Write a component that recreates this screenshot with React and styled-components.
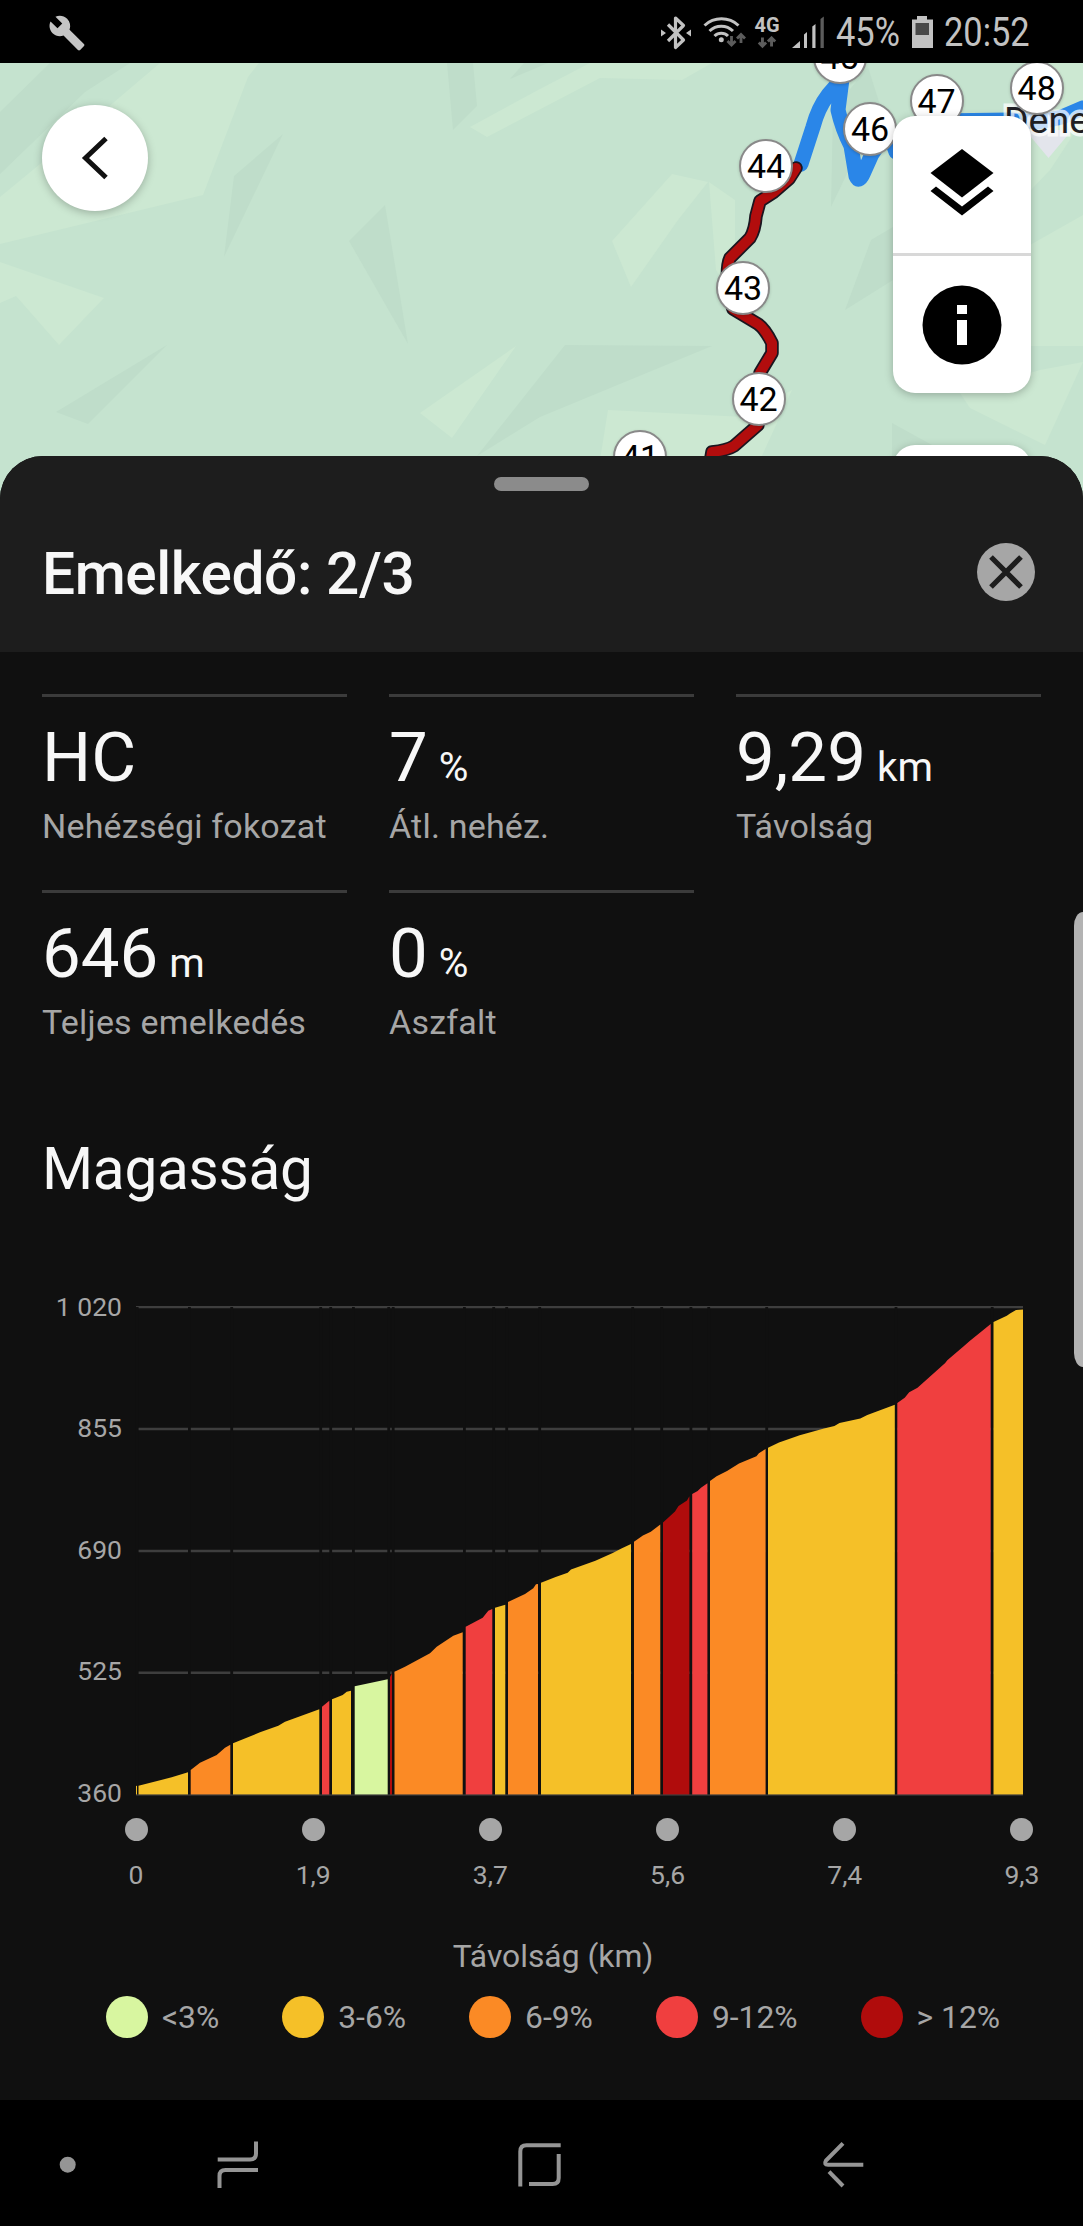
import React from "react";
import styled, { createGlobalStyle } from "styled-components";
import { MdBuild } from "react-icons/md";

const GlobalStyle = createGlobalStyle`
  * { box-sizing: border-box; }
  html, body { margin: 0; padding: 0; background: #000; }
  body { font-family: Roboto, "Noto Sans", sans-serif; -webkit-font-smoothing: antialiased; }
`;

const Screen = styled.div`
  position: relative;
  width: 1083px;
  height: 2226px;
  display: flex;
  flex-direction: column;
  overflow: hidden;
  background: #000;
`;

/* ---------- status bar ---------- */

const StatusBar = styled.header`
  height: 63px;
  flex: none;
  display: flex;
  align-items: center;
  justify-content: space-between;
  padding: 3px 52px 0 48px;
  color: #c2c2c2;
`;

const StatusGroup = styled.div`
  display: flex;
  align-items: center;
`;

const StatusIcon = styled.svg`
  flex: none;
  margin-left: ${(p) => p.$left || 0}px;
`;

const StatusText = styled.span`
  display: block;
  flex: none;
  width: ${(p) => p.$width}px;
  margin-left: ${(p) => p.$left}px;
  font-size: 40px;
  line-height: 60px;
  white-space: nowrap;
  transform: scaleX(0.86);
  transform-origin: left center;
`;

const NetworkBadge = styled.div`
  flex: none;
  width: 26px;
  height: 60px;
  padding-top: 11px;
  margin-left: 7px;
  display: flex;
  flex-direction: column;
  align-items: center;
  font-size: 20px;
  font-weight: 700;
  line-height: 22px;
`;

const BluetoothIcon = () => (
  <StatusIcon width="32" height="36" viewBox="659 15 32 36">
    <path d="M667 24.500L682.500 40L674.500 47.500V18L682.500 25.500L667 41" fill="none" stroke="#c2c2c2" strokeWidth="3.200" strokeLinejoin="round" />
    <path d="M660 29.500L665 33L660 36.500ZM690 29.500L685 33L690 36.500Z" fill="#c2c2c2" />
  </StatusIcon>
);

const DataArrows = () => (
  <svg width="20" height="13" viewBox="0 0 22 13">
    <g fill="none" stroke="#5c5c5c" strokeWidth="3.200">
      <path d="M6 1V10M2 6.500L6 10.500L10 6.500" />
      <path d="M16 11V2M12 5.500L16 1.500L20 5.500" />
    </g>
  </svg>
);

const WifiIcon = () => (
  <StatusIcon $left={11} width="44" height="36" viewBox="702 15 44 36">
    <g fill="none" stroke="#c2c2c2" strokeWidth="3">
      <path d="M703.500 25.500A25 25 0 0 1 737.500 25.500" />
      <path d="M708.500 31A17 17 0 0 1 732 31" />
      <path d="M713.500 36A9.500 9.500 0 0 1 727 36" />
    </g>
    <circle cx="720.300" cy="39.800" r="2.500" fill="#c2c2c2" />
    <g fill="none" stroke="#5c5c5c" strokeWidth="2.800">
      <path d="M730.500 36V45M726.500 41L730.500 45L734.500 41" />
      <path d="M740 43V34.500M736 38.500L740 34.500L744 38.500" />
    </g>
  </StatusIcon>
);

const SignalIcon = () => (
  <StatusIcon $left={12} width="32" height="36" viewBox="791 15 32 36">
    <g fill="#c2c2c2">
      <path d="M791 48L799 41V48Z" />
      <path d="M803 34.500L806 32V48H803Z" />
      <path d="M811.300 26.500L814.500 24V48H811.300Z" />
    </g>
    <path d="M819.500 19L822.800 16.500V48H819.500Z" fill="#5c5c5c" />
  </StatusIcon>
);

const BatteryIcon = () => (
  <StatusIcon $left={12} width="22" height="36" viewBox="910 15 22 36">
    <path d="M911 19.500H916V16H926V19.500H932V48H911Z" fill="#c2c2c2" />
    <rect x="914.500" y="23" width="13.500" height="12" fill="#4a4a4a" />
  </StatusIcon>
);

/* ---------- map ---------- */

const MapArea = styled.section`
  position: relative;
  flex: none;
  height: 453px;
  margin-bottom: -60px;
  overflow: hidden;
  background: #c5e3cf;
`;

const MapArt = styled.svg`
  display: block;
`;

const KmPin = styled.span`
  position: absolute;
  left: ${(p) => p.$x - 27}px;
  top: ${(p) => p.$y - 63 - 27}px;
  width: 54px;
  height: 54px;
  border-radius: 50%;
  border: 2px solid #898989;
  background: #fff;
  color: #000;
  font-size: 34px;
  line-height: 51px;
  text-align: center;
  box-shadow: 0 1px 3px rgba(0, 0, 0, 0.18);
`;

const PlaceLabel = styled.span`
  position: absolute;
  left: 1004px;
  top: 34px;
  font-size: 37.5px;
  line-height: 46px;
  white-space: nowrap;
  color: #1f1f24;
  paint-order: stroke fill;
  -webkit-text-stroke: 7px rgba(255, 255, 255, 0.72);
`;

const BackButton = styled.button`
  position: absolute;
  left: 42px;
  top: 42px;
  width: 106px;
  height: 106px;
  border: 0;
  padding: 0;
  border-radius: 50%;
  background: #fff;
  display: grid;
  place-items: center;
  box-shadow: 0 2px 8px rgba(0, 0, 0, 0.25);
`;

const MapControls = styled.div`
  position: absolute;
  left: 893px;
  top: 53px;
  width: 138px;
  display: flex;
  flex-direction: column;
  gap: 52px;
`;

const ControlCard = styled.div`
  display: flex;
  flex-direction: column;
  min-height: 100px;
  border-radius: 22px;
  background: #fff;
  box-shadow: 0 2px 8px rgba(0, 0, 0, 0.25);
`;

const ControlButton = styled.button`
  height: ${(p) => (p.$divided ? 140 : 137)}px;
  padding: 0 0 ${(p) => (p.$divided ? 4 : 0)}px;
  border: 0;
  border-bottom: ${(p) => (p.$divided ? "3px solid #d8d8d8" : "0")};
  background: none;
  display: grid;
  place-items: center;
`;

const LIGHT = "#cce8d2";
const DARK = "#bfddca";

const facets = [
  [DARK, "50,63 130,63 85,92 0,174 0,112"],
  [LIGHT, "160,63 259,63 248,77 203,195 0,244 0,197 45,160 113,103"],
  [LIGHT, "0,262 104,298 59,345 16,296 0,303"],
  [DARK, "283,134 234,176 224,257"],
  [DARK, "385,205 349,241 408,344"],
  [DARK, "167,345 56,412 88,424"],
  [LIGHT, "516,346 420,413 452,438"],
  [DARK, "565,345 712,346 540,417 477,456"],
  [DARK, "447,63 473,63 477,106 453,130"],
  [LIGHT, "470,127 487,137 600,78 682,80 712,63 590,63 540,89"],
  [DARK, "510,79 524,63 548,63"],
  [LIGHT, "672,174 708,182 678,220 631,287 612,241"],
  [LIGHT, "709,182 735,200 735,300 716,270"],
  [LIGHT, "608,410 745,417 792,390 760,460 600,460"],
  [DARK, "893,227 871,240 845,310 893,280"],
  [DARK, "868,67 880,105 831,207 833,110"],
  [DARK, "892,423 932,445 892,470"],
  [LIGHT, "960,393 1040,370 1083,362 1045,445 970,408"],
  [LIGHT, "1031,63 1083,63 1083,120 1050,170 1031,190"],
  [LIGHT, "1030,245 1083,215 1083,346 1030,346"],
];

const climb =
  "M796 168L789 179L774 192L760 201L756 216Q755 230 750 238L730 258Q726 266 728 290L733 309L758 324Q765 329 772 343V353L760 373L758 425L734 446Q728 450 712 452L708 475";

const MapDrawing = () => (
  <MapArt width="1083" height="453" viewBox="0 63 1083 453">
    {facets.map(([fill, points]) => (
      <polygon key={points} points={points} fill={fill} />
    ))}
    <path d="M1025 130H1072L1048.500 158Z" fill="#e3e5ec" />
    <g fill="none" stroke="#2a86e8" strokeWidth="15" strokeLinejoin="round" strokeLinecap="round">
      <path d="M801 164L813 127Q818 108 828 95L842 79L838 110Q842 128 851 146L856 176Q859 183 863 174L872 154L888 130L896 152" />
      <path d="M936 121L1010 120L1040 122L1062 117L1083 108L1095 106" />
    </g>
    <path d={climb} fill="none" stroke="#1b1620" strokeWidth="13.500" strokeLinejoin="round" strokeLinecap="round" />
    <path d={climb} fill="none" stroke="#b20d0d" strokeWidth="10" strokeLinejoin="round" strokeLinecap="round" />
  </MapArt>
);

const pins = [
  { km: 41, x: 640, y: 457 },
  { km: 42, x: 758.5, y: 399 },
  { km: 43, x: 743, y: 288 },
  { km: 44, x: 766, y: 166 },
  { km: 45, x: 839.5, y: 57 },
  { km: 46, x: 870, y: 128.5 },
  { km: 47, x: 936.5, y: 101 },
  { km: 48, x: 1036.7, y: 88 },
];

/* ---------- bottom sheet ---------- */

const Sheet = styled.main`
  position: relative;
  flex: none;
  height: 1644px;
  border-radius: 43px 43px 0 0;
  overflow: hidden;
  background: #101010;
`;

const SheetHeader = styled.div`
  height: 196px;
  padding: 21px 48px 0 42px;
  display: flex;
  flex-direction: column;
  background: #1d1d1d;
`;

const Handle = styled.div`
  align-self: center;
  width: 95px;
  height: 14px;
  margin-left: 6px;
  flex: none;
  border-radius: 7px;
  background: #8b8b8b;
`;

const TitleRow = styled.div`
  display: flex;
  align-items: center;
  justify-content: space-between;
  margin-top: 47px;
  height: 70px;
`;

const Title = styled.h1`
  margin: 1px 0 0;
  font-size: 58.6px;
  font-weight: 500;
  line-height: 70px;
  letter-spacing: -0.4px;
  color: #f7f7f7;
`;

const CloseButton = styled.button`
  width: 58px;
  height: 58px;
  margin-top: -3px;
  border: 0;
  padding: 0;
  border-radius: 50%;
  background: #a6a6a6;
  display: grid;
  place-items: center;
`;

const StatGrid = styled.dl`
  margin: 0;
  padding: 42px 42px 0;
  display: grid;
  grid-template-columns: repeat(3, 1fr);
  grid-auto-rows: 196px;
  column-gap: 42px;
`;

const Stat = styled.div`
  border-top: 3px solid #3b3b3b;
  padding-top: 21px;
  display: flex;
  flex-direction: column-reverse;
  justify-content: flex-end;
`;

const StatValue = styled.dd`
  margin: 0;
  height: 80px;
  font-size: 69px;
  line-height: 80px;
  color: #f7f7f7;
  white-space: nowrap;
`;

const Unit = styled.span`
  margin-left: 11px;
  font-size: 40.5px;
  line-height: 1;
`;

const StatLabel = styled.dt`
  margin-top: 8px;
  font-size: 34px;
  line-height: 40px;
  letter-spacing: 0.2px;
  color: #a6a6a6;
  white-space: nowrap;
`;

const SectionTitle = styled.h2`
  margin: 48px 0 0 42px;
  font-size: 58.6px;
  font-weight: 400;
  line-height: 70px;
  letter-spacing: -0.3px;
  color: #f7f7f7;
`;

const Chart = styled.figure`
  margin: 102px 0 0;
  display: grid;
  grid-template-columns: 122px 901px;
`;

const YAxis = styled.div`
  height: 486px;
  display: flex;
  flex-direction: column;
  justify-content: space-between;
`;

const YLabel = styled.span`
  height: 0;
  display: flex;
  align-items: center;
  justify-content: flex-end;
  font-size: 26.5px;
  color: #a6a6a6;
  white-space: nowrap;
`;

const Plot = styled.svg`
  display: block;
  margin-left: 12px;
`;

const XAxis = styled.div`
  grid-column: 1 / -1;
  display: flex;
  justify-content: space-between;
  margin: 22px 0 0 94px;
  width: 970px;
`;

const XTick = styled.div`
  width: 84px;
  display: flex;
  flex-direction: column;
  align-items: center;
  gap: 18px;
  font-size: 26.5px;
  line-height: 32px;
  color: #a6a6a6;
`;

const TickDot = styled.i`
  width: 23px;
  height: 23px;
  border-radius: 50%;
  background: #a6a6a6;
`;

const AxisCaption = styled.figcaption`
  grid-column: 1 / -1;
  margin: 45px 0 0 23px;
  width: 1060px;
  text-align: center;
  font-size: 31.8px;
  line-height: 40px;
  color: #a6a6a6;
`;

const Legend = styled.ul`
  list-style: none;
  margin: 20px 0 0 23px;
  padding: 0;
  width: 1060px;
  display: flex;
  justify-content: center;
  gap: 63px;
`;

const LegendItem = styled.li`
  display: flex;
  align-items: center;
  gap: 14px;
  font-size: 31.8px;
  line-height: 42px;
  color: #a6a6a6;
  white-space: nowrap;

  &::before {
    content: "";
    width: 42px;
    height: 42px;
    border-radius: 50%;
    background: ${(p) => p.$color};
  }
`;

const EdgeHandle = styled.div`
  position: absolute;
  right: 0;
  top: 912px;
  width: 9px;
  height: 455px;
  border-radius: 9px 0 0 9px / 14px 0 0 14px;
  background: #b3b3b3;
`;

const grade = {
  easy: "#d8f6a0",
  mild: "#f5c028",
  mid: "#fb8a25",
  hard: "#f03f3f",
  extreme: "#b00c0c",
};

const segments = [
  ["mild", [[136, 1786], [137, 1785.7]]],
  ["mild", [[138.5, 1785.7], [171.7, 1777.3], [188, 1772.3]]],
  ["mid", [[190.7, 1770], [200, 1762.7], [216.7, 1755], [225, 1747.7], [230.3, 1744.7]]],
  ["mild", [[233, 1743.3], [260, 1732.3], [278.3, 1725.7], [285, 1721.7], [319.3, 1709.3]]],
  ["hard", [[322, 1706.7], [329.3, 1700.7]]],
  ["mild", [[332, 1699.3], [342.7, 1695], [346.7, 1691.7], [351, 1690.7]]],
  ["easy", [[354.7, 1686.3], [387.7, 1679.3]]],
  ["extreme", [[390, 1677], [392, 1673.5]]],
  ["mid", [[394.5, 1671.7], [405, 1666.7], [430, 1653.3], [436.7, 1646.7], [453.3, 1635.7], [462.7, 1632.3]]],
  ["hard", [[465.7, 1626.7], [482.7, 1617.7], [488.3, 1610.7], [492.3, 1609]]],
  ["mild", [[495, 1607.7], [505.3, 1604.7]]],
  ["mid", [[508, 1602], [525, 1594], [533.3, 1588.3], [536, 1584.3], [538, 1584]]],
  ["mild", [[541, 1582.7], [555.6, 1576.9], [567.7, 1572.7], [571, 1569.6], [595.4, 1560.7], [612.7, 1553], [621.4, 1548.6], [631, 1544]]],
  ["mid", [[634, 1541.7], [642.9, 1535.5], [650.8, 1531.7], [660.3, 1524.5]]],
  ["extreme", [[663, 1522.4], [675, 1511.4], [678.5, 1505.9], [687, 1500.4], [689.4, 1496.3]]],
  ["hard", [[692.2, 1493.9], [697.6, 1491], [701, 1487.7], [707.4, 1483.2]]],
  ["mid", [[710, 1481], [716.6, 1476.3], [727, 1471], [739, 1463.6], [756.4, 1456.3], [758.9, 1453.2], [765.6, 1449]]],
  ["mild", [[768, 1447.7], [779, 1442.6], [799.7, 1435.3], [824, 1428.4], [834.4, 1426], [839.5, 1422.9], [860.3, 1418.4], [867.3, 1415], [894.8, 1404.7]]],
  ["hard", [[897.3, 1403], [904.7, 1397.8], [909.2, 1392.3], [917.5, 1387.8], [945.2, 1363], [947.3, 1360.2], [964, 1346], [969.4, 1341.3], [990.7, 1324]]],
  ["mild", [[993.5, 1322], [1006.8, 1315.8], [1010, 1313.4], [1016, 1310], [1023, 1309.6]]],
];

const yTicks = ["1 020", "855", "690", "525", "360"];
const gridY = [1307, 1429, 1551, 1672.7];
const xTicks = ["0", "1,9", "3,7", "5,6", "7,4", "9,3"];

const ElevationPlot = () => (
  <Plot width="889" height="490" viewBox="134 1306 889 490">
    {gridY.map((y) => (
      <path key={y} d={`M136 ${y}H1023`} stroke="#3e3e3e" strokeWidth="2.400" />
    ))}
    {segments.slice(1).map(([, pts]) => (
      <path key={pts[0][0]} d={`M${pts[0][0] - 1.3} 1307V1795`} stroke="#101010" strokeWidth="2.800" />
    ))}
    {segments.map(([kind, pts], i) => (
      <polygon
        key={i}
        fill={grade[kind]}
        points={`${pts[0][0]},1795 ${pts.map((p) => p.join(",")).join(" ")} ${pts[pts.length - 1][0]},1795`}
      />
    ))}
    <path d="M136 1795H1023" stroke="#3e3e3e" strokeWidth="1.500" opacity="0.8" />
  </Plot>
);

const stats = [
  { label: "Nehézségi fokozat", value: "HC" },
  { label: "Átl. nehéz.", value: "7", unit: "%" },
  { label: "Távolság", value: "9,29", unit: "km" },
  { label: "Teljes emelkedés", value: "646", unit: "m" },
  { label: "Aszfalt", value: "0", unit: "%" },
];

const legend = [
  [grade.easy, "<3%"],
  [grade.mild, "3-6%"],
  [grade.mid, "6-9%"],
  [grade.hard, "9-12%"],
  [grade.extreme, "> 12%"],
];

/* ---------- navigation bar ---------- */

const NavBar = styled.nav`
  flex: none;
  height: 126px;
  display: flex;
  align-items: center;
  padding: 3px 0 0 59px;
`;

const NavItem = styled.svg`
  flex: none;
  margin-right: ${(p) => p.$gap || 0}px;
  fill: none;
  stroke: #959595;
  stroke-width: 4;
`;

export default function App() {
  return (
    <Screen>
      <GlobalStyle />
      <StatusBar>
        <MdBuild size={38} color="#c4c4c4" />
        <StatusGroup>
          <BluetoothIcon />
          <WifiIcon />
          <NetworkBadge>
            4G
            <DataArrows />
          </NetworkBadge>
          <SignalIcon />
          <StatusText $left={12} $width={63}>45%</StatusText>
          <BatteryIcon />
          <StatusText $left={11} $width={87}>20:52</StatusText>
        </StatusGroup>
      </StatusBar>

      <MapArea>
        <MapDrawing />
        <PlaceLabel>Dene</PlaceLabel>
        {pins.map((p) => (
          <KmPin key={p.km} $x={p.x} $y={p.y}>{p.km}</KmPin>
        ))}
        <BackButton aria-label="Vissza">
          <svg width="106" height="106" viewBox="0 0 106 106">
            <path d="M64 33.500L43.500 53L64 72.500" fill="none" stroke="#111" strokeWidth="5" />
          </svg>
        </BackButton>
        <MapControls>
          <ControlCard>
            <ControlButton $divided aria-label="Rétegek">
              <svg width="64" height="70" viewBox="930 148 64 70">
                <path d="M962 149L993.500 173L962 197.500L930.500 173Z" />
                <path d="M936 186.500L962 206.500L988 186.500L993.500 191L962 215.500L930.500 191Z" />
              </svg>
            </ControlButton>
            <ControlButton aria-label="Információ">
              <svg width="80" height="80" viewBox="0 0 80 80">
                <circle cx="40" cy="40" r="39.500" />
                <path d="M35 20H45V29H35ZM35 35H45V60H35Z" fill="#fff" />
              </svg>
            </ControlButton>
          </ControlCard>
          <ControlCard />
        </MapControls>
      </MapArea>

      <Sheet>
        <SheetHeader>
          <Handle />
          <TitleRow>
            <Title>Emelkedő: 2/3</Title>
            <CloseButton aria-label="Bezárás">
              <svg width="34" height="34" viewBox="0 0 34 34">
                <path d="M2 2L32 32M32 2L2 32" stroke="#1d1d1d" strokeWidth="5.200" />
              </svg>
            </CloseButton>
          </TitleRow>
        </SheetHeader>

        <StatGrid>
          {stats.map((s) => (
            <Stat key={s.label}>
              <StatLabel>{s.label}</StatLabel>
              <StatValue>
                {s.value}
                {s.unit && <Unit>{s.unit}</Unit>}
              </StatValue>
            </Stat>
          ))}
        </StatGrid>

        <SectionTitle>Magasság</SectionTitle>
        <Chart>
          <YAxis>
            {yTicks.map((t) => (
              <YLabel key={t}>{t}</YLabel>
            ))}
          </YAxis>
          <ElevationPlot />
          <XAxis>
            {xTicks.map((t) => (
              <XTick key={t}>
                <TickDot />
                {t}
              </XTick>
            ))}
          </XAxis>
          <AxisCaption>Távolság (km)</AxisCaption>
        </Chart>
        <Legend>
          {legend.map(([color, text]) => (
            <LegendItem key={text} $color={color}>{text}</LegendItem>
          ))}
        </Legend>
      </Sheet>

      <NavBar>
        <NavItem width="18" height="50" viewBox="59 2140 18 50" $gap={139}>
          <circle cx="67.700" cy="2164.700" r="8" fill="#959595" stroke="none" />
        </NavItem>
        <NavItem width="44" height="50" viewBox="216 2140 44 50" $gap={257}>
          <path d="M217.700 2159.500H250Q256 2159.500 256 2153.500V2141.500" />
          <path d="M258 2170H225.500Q219.500 2170 219.500 2176V2188" />
        </NavItem>
        <NavItem width="46" height="50" viewBox="517 2140 46 50" $gap={258}>
          <path d="M520.300 2186.500V2151.500Q520.300 2145.300 526.500 2145.300H560.700" />
          <path d="M558.700 2154V2178Q558.700 2184 552.700 2184H529" />
        </NavItem>
        <NavItem width="46" height="50" viewBox="821 2140 46 50">
          <path d="M843 2143.300L826 2160.500Q823.500 2164.700 828 2164.700H863.300" />
          <path d="M829 2171.700L843 2186" />
        </NavItem>
      </NavBar>
      <EdgeHandle />
    </Screen>
  );
}
